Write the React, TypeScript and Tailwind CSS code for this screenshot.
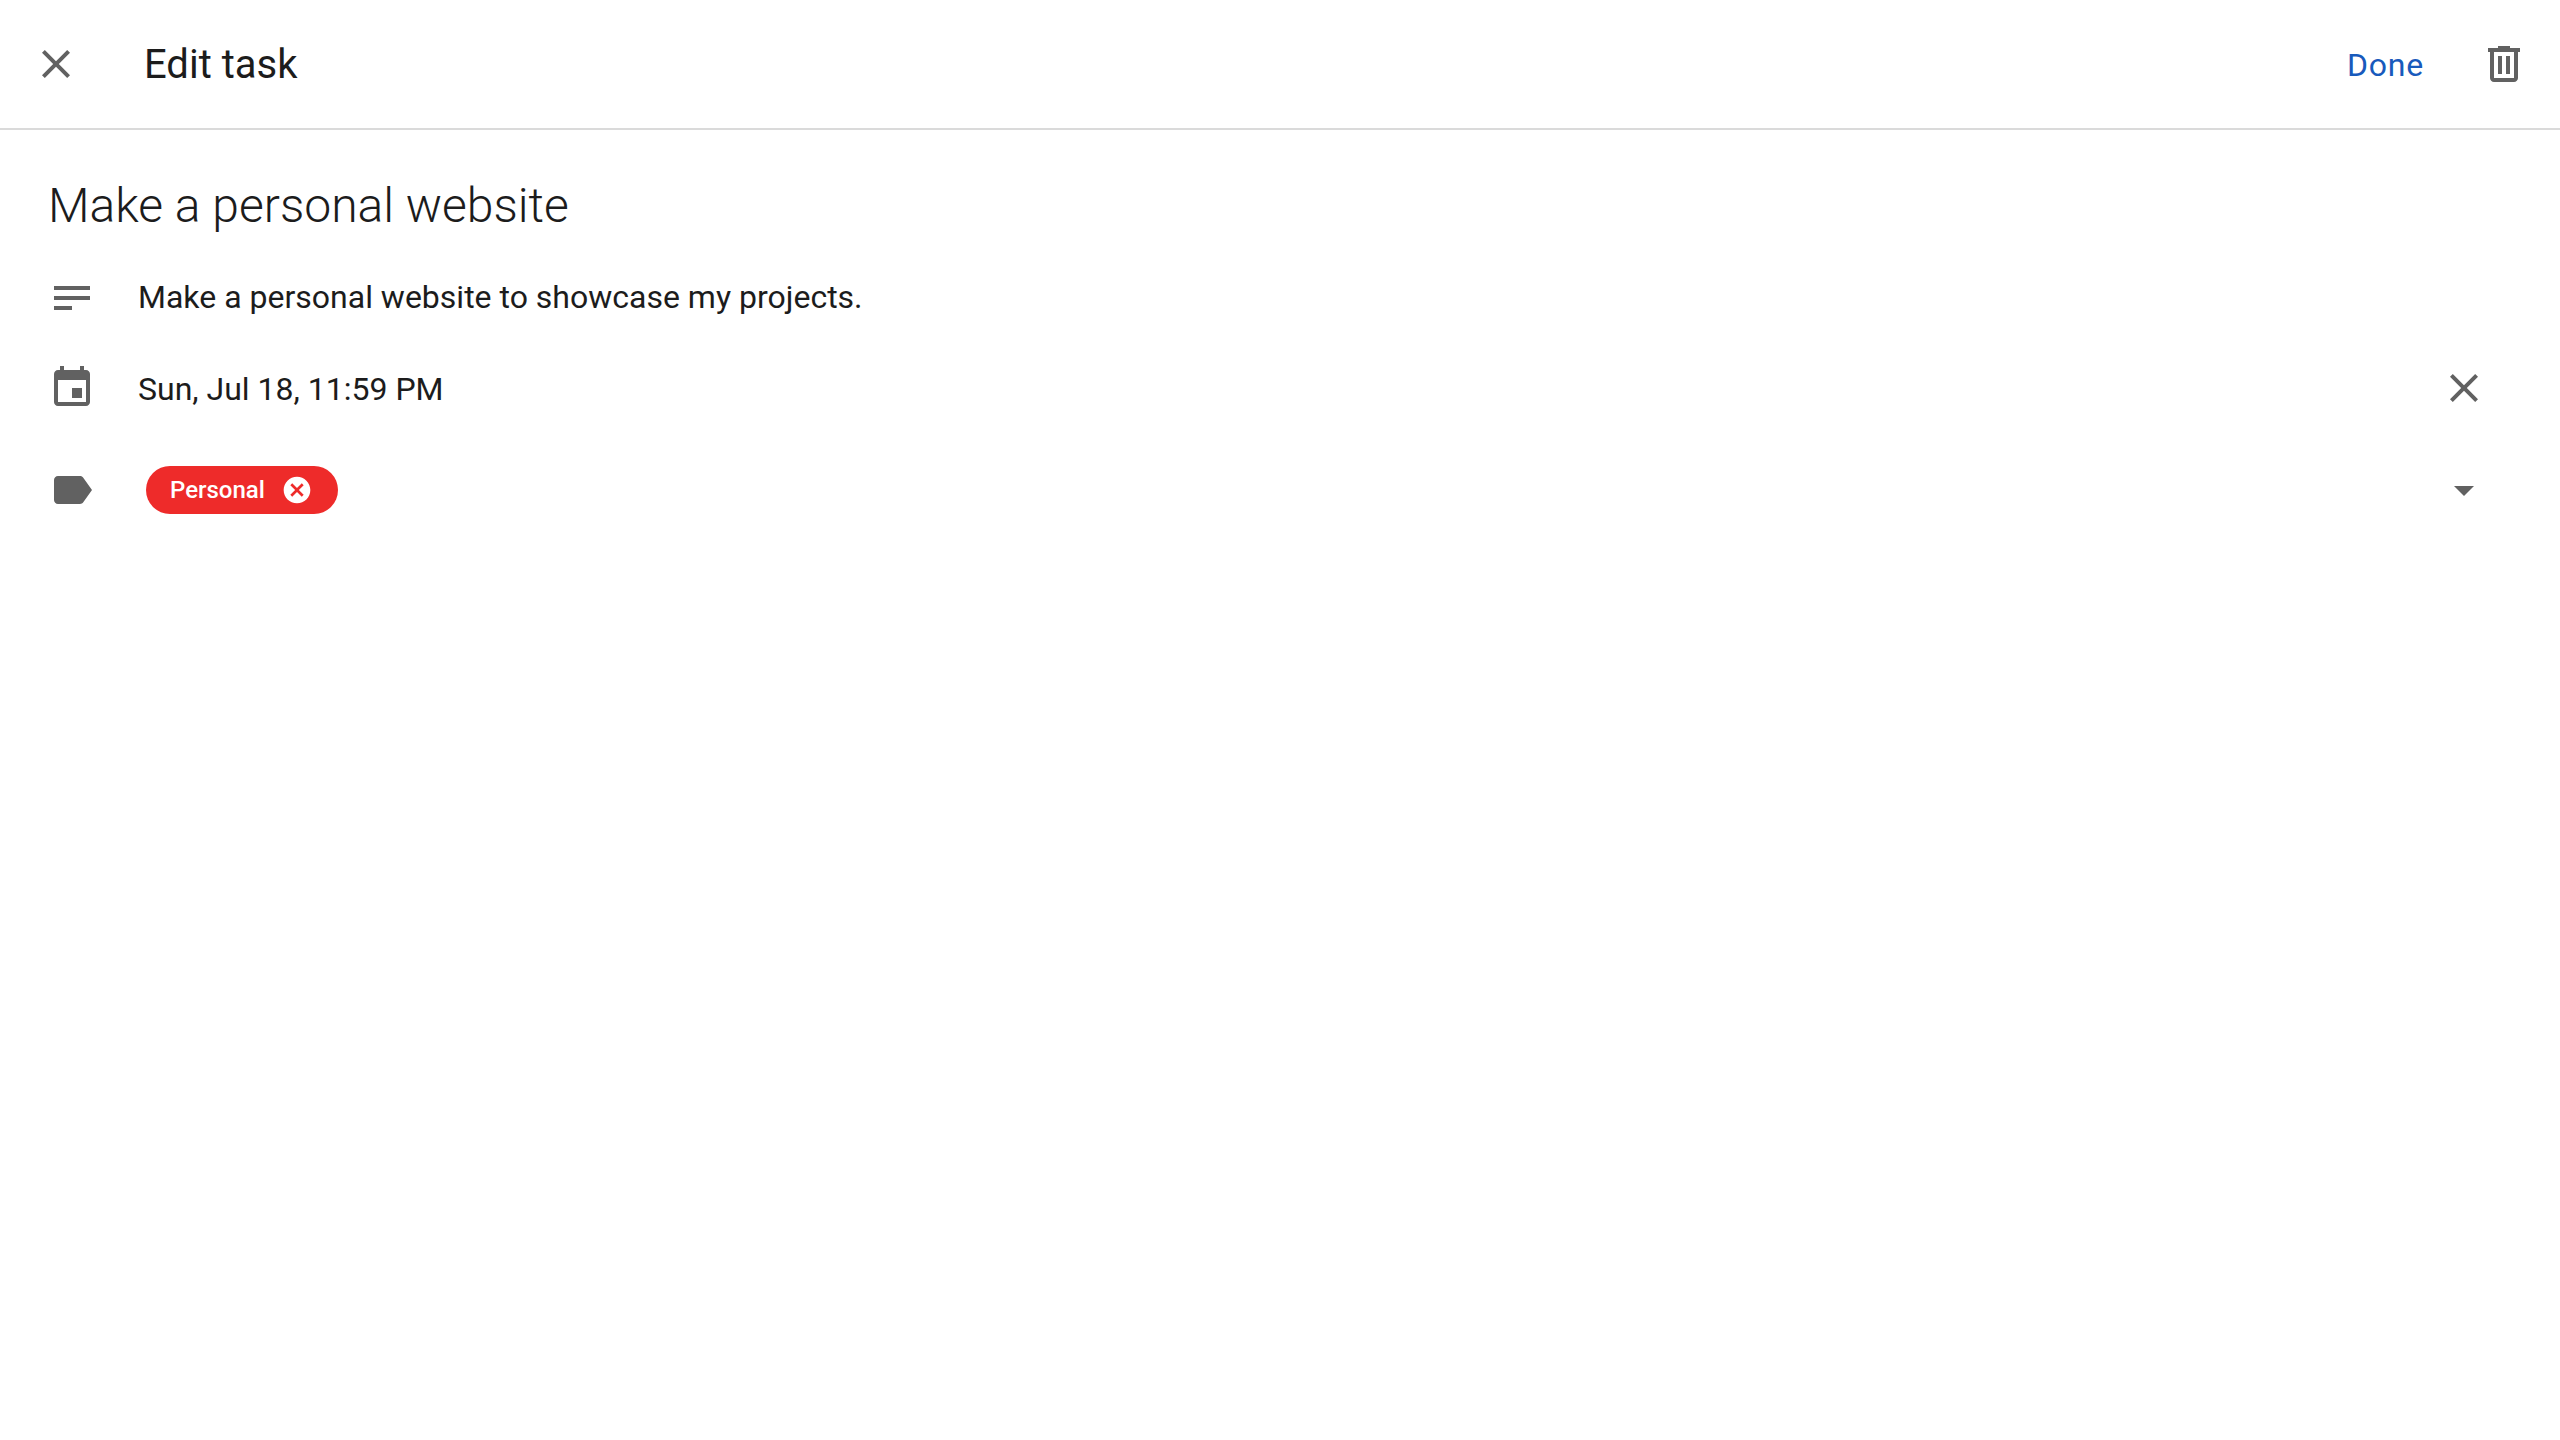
import { useState } from "react";

function Icon({ d, className = "size-12" }: { d: string; className?: string }) {
  return (
    <svg viewBox="0 0 24 24" fill="currentColor" aria-hidden="true" className={`shrink-0 ${className}`}>
      <path fillRule="evenodd" d={d} />
    </svg>
  );
}

const CLOSE =
  "M19 6.41 17.59 5 12 10.59 6.41 5 5 6.41 10.59 12 5 17.59 6.41 19 12 13.41 17.59 19 19 17.59 13.41 12z";
const TRASH =
  "M9 3h6v1h5v2h-1v13c0 1.1-.9 2-2 2H7c-1.1 0-2-.9-2-2V6H4V4h5V3zM7 6v13h10V6H7zM9 8h2v9H9V8zM13 8h2v9h-2V8z";
const NOTES = "M3 6h18v2H3zM3 11h18v2H3zM3 16h9v2H3z";
const EVENT =
  "M17 12h-5v5h5v-5zM16 1v2H8V1H6v2H5c-1.11 0-1.99.9-1.99 2L3 19c0 1.1.89 2 2 2h14c1.1 0 2-.9 2-2V5c0-1.1-.9-2-2-2h-1V1h-2zm3 18H5V8h14v11z";
const LABEL =
  "M17.63 5.84C17.27 5.33 16.67 5 16 5L5 5.01C3.9 5.01 3 5.9 3 7v10c0 1.1.9 1.99 2 1.99L16 19c.67 0 1.27-.33 1.63-.84L22 12l-4.37-6.16z";
const CANCEL =
  "M12 2C6.47 2 2 6.47 2 12s4.47 10 10 10 10-4.47 10-10S17.53 2 12 2zm5 13.59L15.59 17 12 13.41 8.41 17 7 15.59 10.59 12 7 8.41 8.41 7 12 10.59 15.59 7 17 8.41 13.41 12 17 15.59z";
const ARROW = "M7 10l5 5 5-5z";

export default function App() {
  const [title, setTitle] = useState("Make a personal website");
  const [description, setDescription] = useState("Make a personal website to showcase my projects.");
  const [due, setDue] = useState("Sun, Jul 18, 11:59 PM");

  return (
    <div className="min-h-screen bg-white font-['Roboto',sans-serif] text-[#1c1c1c]">
      <header className="flex h-[130px] items-center border-b-2 border-[#dadada] px-8">
        <button type="button" aria-label="Close" className="text-[#616161]">
          <Icon d={CLOSE} />
        </button>
        <h1 className="ml-16 flex-1 pt-0.5 text-[40px] leading-16">Edit task</h1>
        <button type="button" className="mr-14 pt-0.5 text-[32px] leading-14 tracking-wide text-[#185abc]">
          Done
        </button>
        <button type="button" aria-label="Delete task" className="text-[#616161]">
          <Icon d={TRASH} />
        </button>
      </header>

      <main className="px-12 pt-10">
        <input
          aria-label="Title"
          value={title}
          onChange={(e) => setTitle(e.target.value)}
          className="block h-18 w-full text-[48px] font-light outline-none"
        />
        <div className="mt-4 flex h-20 items-center gap-[42px]">
          <span className="text-[#616161]">
            <Icon d={NOTES} />
          </span>
          <input
            aria-label="Description"
            value={description}
            onChange={(e) => setDescription(e.target.value)}
            className="h-12 flex-1 pb-0.5 text-[32px] outline-none"
          />
        </div>
        <div className="mt-2.5 flex h-20 items-center gap-[42px] pr-6">
          <span className="text-[#616161]">
            <Icon d={EVENT} />
          </span>
          <input
            aria-label="Due date"
            value={due}
            onChange={(e) => setDue(e.target.value)}
            className="h-12 flex-1 pt-0.5 text-[32px] outline-none"
          />
          <button type="button" aria-label="Clear due date" className="text-[#616161]">
            <Icon d={CLOSE} />
          </button>
        </div>
        <div className="mt-[22px] flex h-20 items-center pr-6 text-[#616161]">
          <Icon d={LABEL} />
          <div className="ml-[50px] flex h-12 min-w-48 items-center gap-4 rounded-full bg-[#ee2b2a] px-6 text-2xl font-medium text-white">
            Personal
            <button type="button" aria-label="Remove Personal">
              <Icon d={CANCEL} className="size-8" />
            </button>
          </div>
          <button type="button" aria-label="Choose labels" className="ml-auto">
            <Icon d={ARROW} />
          </button>
        </div>
      </main>
    </div>
  );
}
